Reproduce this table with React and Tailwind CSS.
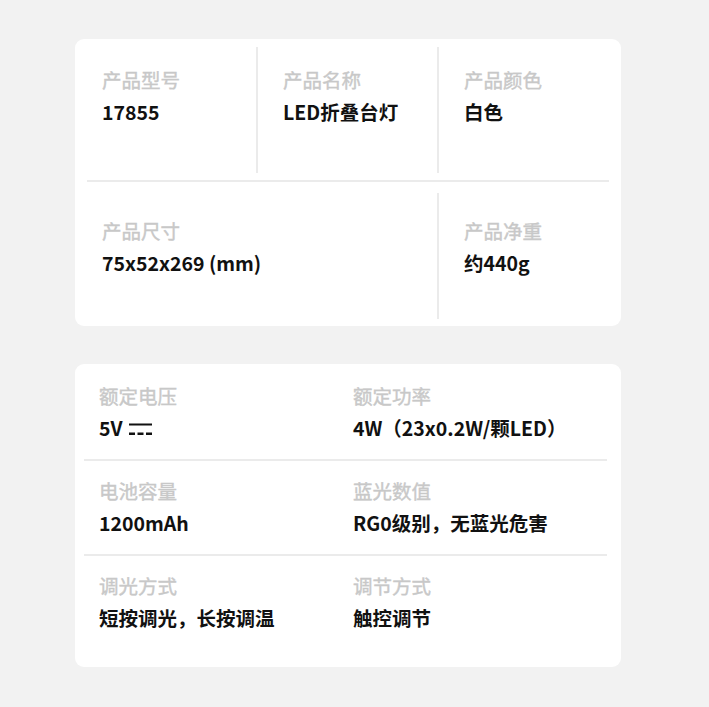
const font = { fontFamily: '"Noto Sans CJK SC", "Noto Sans", sans-serif' };

const DcSymbol = () => (
  <svg width="23" height="13" viewBox="0 0 23 13" className="ml-[6px] inline-block align-baseline">
    <rect x="0" y="0.5" width="23" height="2" fill="#111" />
    <rect x="0" y="9.5" width="6" height="2.5" fill="#111" />
    <rect x="8.5" y="9.5" width="6" height="2.5" fill="#111" />
    <rect x="17" y="9.5" width="6" height="2.5" fill="#111" />
  </svg>
);

const Field = ({ label, children }) => (
  <>
    <div className="text-[19.5px] leading-8 text-[#c8c8c8] [-webkit-text-stroke:0.4px_#c8c8c8]">{label}</div>
    <div className="text-[19.5px] leading-8 font-bold text-[#111]">{children}</div>
  </>
);

const specs = [
  ['额定电压', <>5V<DcSymbol /></>, '额定功率', '4W（23x0.2W/颗LED）'],
  ['电池容量', '1200mAh', '蓝光数值', 'RG0级别，无蓝光危害'],
  ['调光方式', '短按调光，长按调温', '调节方式', '触控调节'],
];

export default function App() {
  return (
    <div className="min-h-[707px] bg-[#f2f2f2] pt-[39px] pb-10" style={font}>
      {/* product info */}
      <div className="ml-[75px] w-[546px] rounded-[9px] bg-white pt-2 pb-[7px]">
        <div className="grid grid-cols-[181px_181px_1fr]">
          <div className="h-[126px] pl-[27px] pt-[17px]">
            <Field label="产品型号">17855</Field>
          </div>
          <div className="h-[126px] border-l-2 border-[#ebebeb] pl-[25px] pt-[17px]">
            <Field label="产品名称">LED折叠台灯</Field>
          </div>
          <div className="h-[126px] border-l-2 border-[#ebebeb] pl-[25px] pt-[17px]">
            <Field label="产品颜色">白色</Field>
          </div>
        </div>
        <div className="mx-3 mt-[7px] mb-[11px] h-[2px] bg-[#ebebeb]" />
        <div className="grid grid-cols-[181px_181px_1fr]">
          <div className="col-span-2 h-[126px] pl-[27px] pt-[22px]">
            <Field label="产品尺寸">75x52x269 (mm)</Field>
          </div>
          <div className="h-[126px] border-l-2 border-[#ebebeb] pl-[25px] pt-[22px]">
            <Field label="产品净重">约440g</Field>
          </div>
        </div>
      </div>

      {/* electrical specs */}
      <div className="mt-[38px] ml-[75px] w-[546px] rounded-[9px] bg-white pt-4 pb-[33px]">
        {specs.map((row, i) => (
          <div key={i}>
            {i > 0 && <div className="mt-[15px] mb-[14px] ml-[9px] mr-[14px] h-[2px] bg-[#ebebeb]" />}
            <div className="grid grid-cols-[254px_1fr] pl-6">
              <div>
                <Field label={row[0]}>{row[1]}</Field>
              </div>
              <div>
                <Field label={row[2]}>{row[3]}</Field>
              </div>
            </div>
          </div>
        ))}
      </div>
    </div>
  );
}
